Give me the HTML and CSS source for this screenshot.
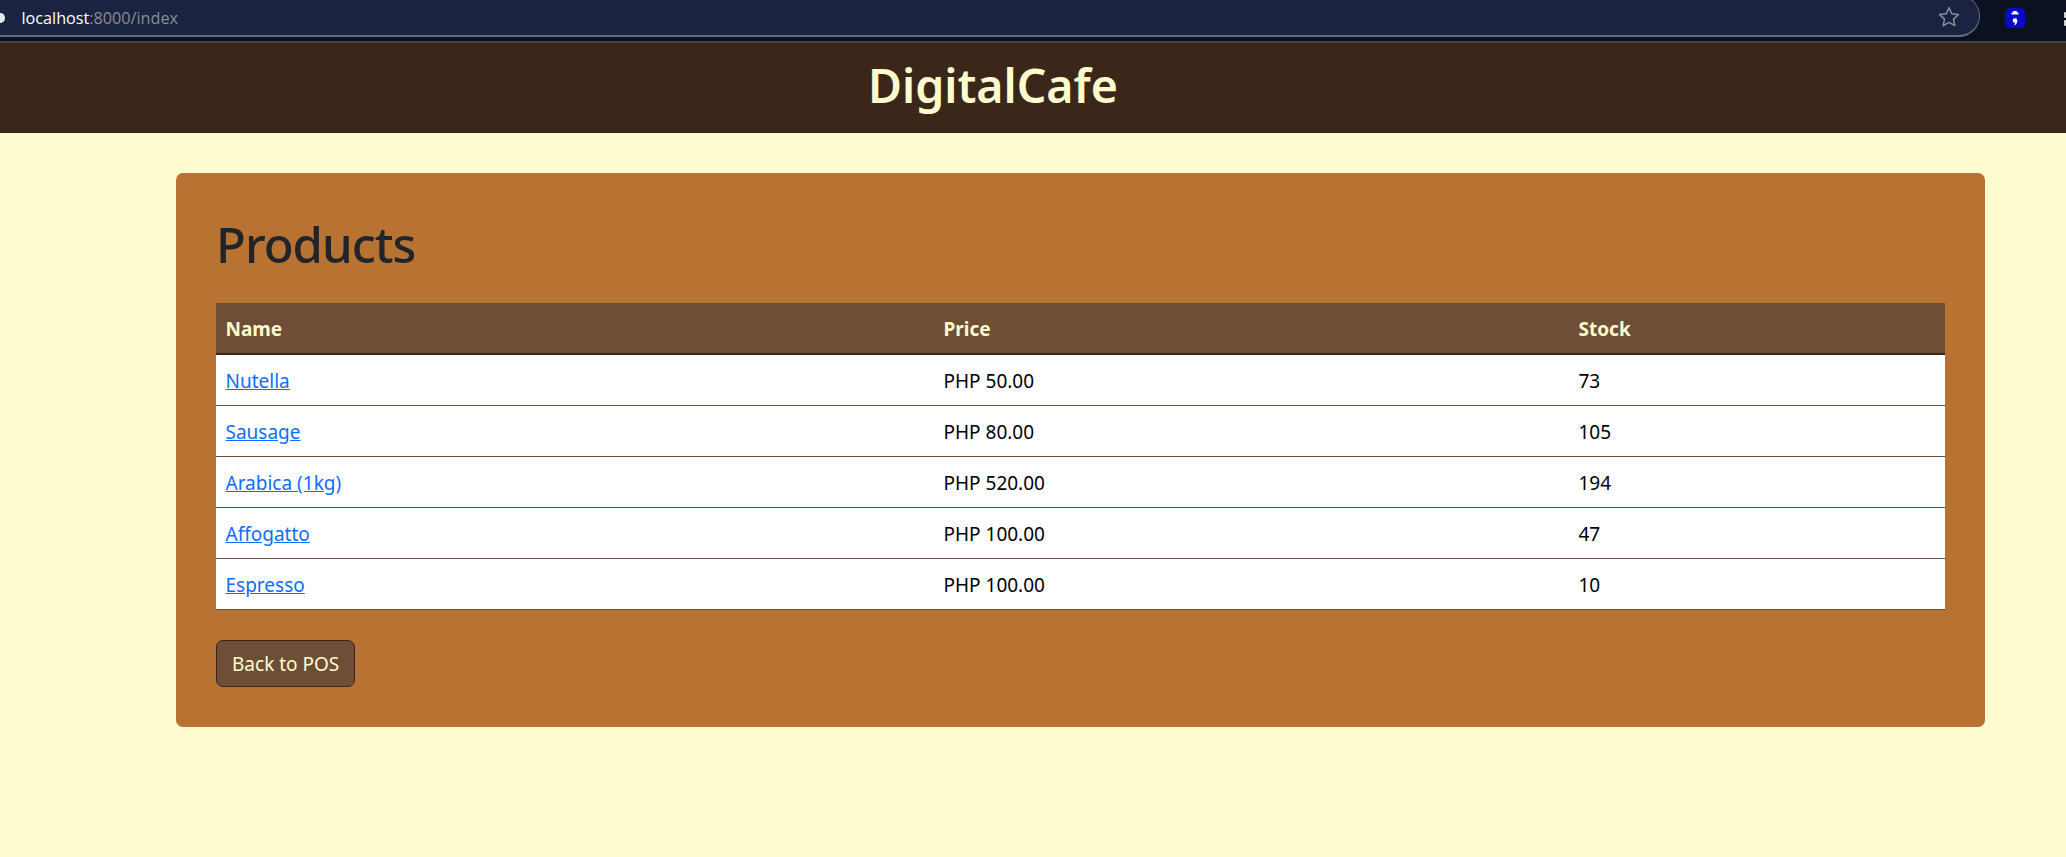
FILE: index.html
```html
<!DOCTYPE html>
<html lang="en">
<head>
<meta charset="utf-8">
<title>DigitalCafe</title>
<link rel="stylesheet" href="styles.css">
</head>
<body>
<div class="browser">
  <div class="omnibox">
    <span class="site-dot"></span>
    <span class="url"><span class="host">localhost</span>:8000/index</span>
    <svg class="star" width="22" height="22" viewBox="0 0 22 22"><path d="M11 1.8l2.8 6 6.6.8-4.9 4.5 1.3 6.5-5.8-3.3-5.8 3.3 1.3-6.5-4.9-4.5 6.6-.8z" fill="none" stroke="#8b8f99" stroke-width="1.5" stroke-linejoin="round"/></svg>
  </div>
  <div class="extensions">
    <svg class="ext" width="20" height="20" viewBox="0 0 20 20"><path d="M3 0h14l3 3v14l-3 3H3l-3-3V3z" fill="#0808c8"/><path d="M8.5 3h3l.8 1.5h1.2v2h-7v-2h1.200z" fill="#fff"/><circle cx="10" cy="12.500" r="2.300" fill="#fff"/><path d="M12.300 12.500c0 2.500-1 4-3 5l.8-3z" fill="#fff"/></svg>
    <svg class="puzzle" width="20" height="20" viewBox="0 0 20 20"><path d="M8 3a2 2 0 0 1 4 0v2h5v4h-2a2 2 0 0 0 0 4h2v4H3v-4h1a2 2 0 0 0 0-4H3V5h5z" fill="none" stroke="#fff" stroke-width="1.600"/></svg>
  </div>
</div>
<header class="site-header"><h1 class="brand">DigitalCafe</h1></header>
<main class="page">
  <section class="card">
    <h2 class="title">Products</h2>
    <table class="products">
      <colgroup><col class="col-name"><col class="col-price"><col class="col-stock"></colgroup>
      <thead><tr><th>Name</th><th>Price</th><th>Stock</th></tr></thead>
      <tbody>
        <tr><td><a href="#">Nutella</a></td><td>PHP 50.00</td><td>73</td></tr>
        <tr><td><a href="#">Sausage</a></td><td>PHP 80.00</td><td>105</td></tr>
        <tr><td><a href="#">Arabica (1kg)</a></td><td>PHP 520.00</td><td>194</td></tr>
        <tr><td><a href="#">Affogatto</a></td><td>PHP 100.00</td><td>47</td></tr>
        <tr><td><a href="#">Espresso</a></td><td>PHP 100.00</td><td>10</td></tr>
      </tbody>
    </table>
    <a class="back" href="#">Back to POS</a>
  </section>
</main>
</body>
</html>
```
FILE: styles.css
```css
* { box-sizing: border-box; }
html, body { margin: 0; padding: 0; }
body {
  background: #fffdd0;
  font-family: "Noto Sans", "Open Sans", sans-serif;
  font-size: 20px;
  color: #000;
  height: 857px;
  overflow: hidden;
}
.browser {
  height: 43px;
  background: #0c1120;
  border-bottom: 2px solid #43454f;
  display: flex;
  align-items: flex-start;
  overflow: hidden;
}
.omnibox {
  width: 2010px;
  height: 42px;
  margin: -5px 0 0 -30px;
  background: #1a2340;
  border: 1px solid #666b7c;
  border-bottom-width: 2px;
  border-radius: 21px;
  display: flex;
  align-items: center;
  position: relative;
  padding: 5px 0 0 50.500px;
  flex: none;
}
.site-dot {
  position: absolute;
  left: 25px;
  top: 17px;
  width: 9px;
  height: 10px;
  border-radius: 50%;
  background: #e8e8e8;
}
.url {
  font-family: "Open Sans", "Noto Sans", sans-serif;
  font-size: 16.200px;
  color: #8a8d95;
  flex: 1;
}
.host { color: #fff; }
.star { margin-right: 19px; margin-top: -2px; }
.extensions {
  flex: 1;
  display: flex;
  align-items: center;
  height: 35px;
  padding-left: 25px;
  gap: 37px;
  overflow: hidden;
}
.ext, .puzzle { flex: none; }
.site-header {
  height: 90px;
  background: #3b2719;
  display: flex;
  align-items: center;
  justify-content: center;
  padding: 0 80px 4px 0;
}
.brand {
  margin: 0;
  font-size: 46.500px;
  font-weight: 600;
  line-height: 1.2;
  color: #fffdd0;
}
.page { padding: 40px 81px 0 176px; }
.card {
  height: 554px;
  background: #b87333;
  border-radius: 7px;
  padding: 40px;
}
.title {
  margin: 0;
  height: 90px;
  font-size: 49px;
  font-weight: 500;
  letter-spacing: -1px;
  line-height: 63px;
  color: #212529;
}
.products {
  width: 100%;
  table-layout: fixed;
  border-collapse: separate;
  border-spacing: 0;
  background: #fff;
  margin-bottom: 30px;
}
.col-name { width: 718px; }
.col-price { width: 635px; }
.col-stock { width: 376px; }
.products th, .products td {
  padding: 10px 10px 9px 9.500px;
  line-height: 30px;
  text-align: left;
  font-weight: 400;
  font-size: 19px;
}
.products th {
  background: #6f4e37;
  color: #fffdd0;
  font-weight: 700;
  border-bottom: 2px solid #3b2719;
  height: 52px;
}
.products td {
  border-bottom: 1px solid #6f4e37;
  height: 51px;
  padding-top: 11px;
  padding-bottom: 9px;
}
.products a { color: #0d6efd; text-decoration: underline; }
.back {
  display: inline-block;
  height: 47px;
  padding: 0 15px;
  background: #6f4e37;
  border: 1px solid #3b2719;
  border-radius: 7px;
  color: #fffdd0;
  font-size: 19px;
  line-height: 46px;
  text-decoration: none;
}
```
